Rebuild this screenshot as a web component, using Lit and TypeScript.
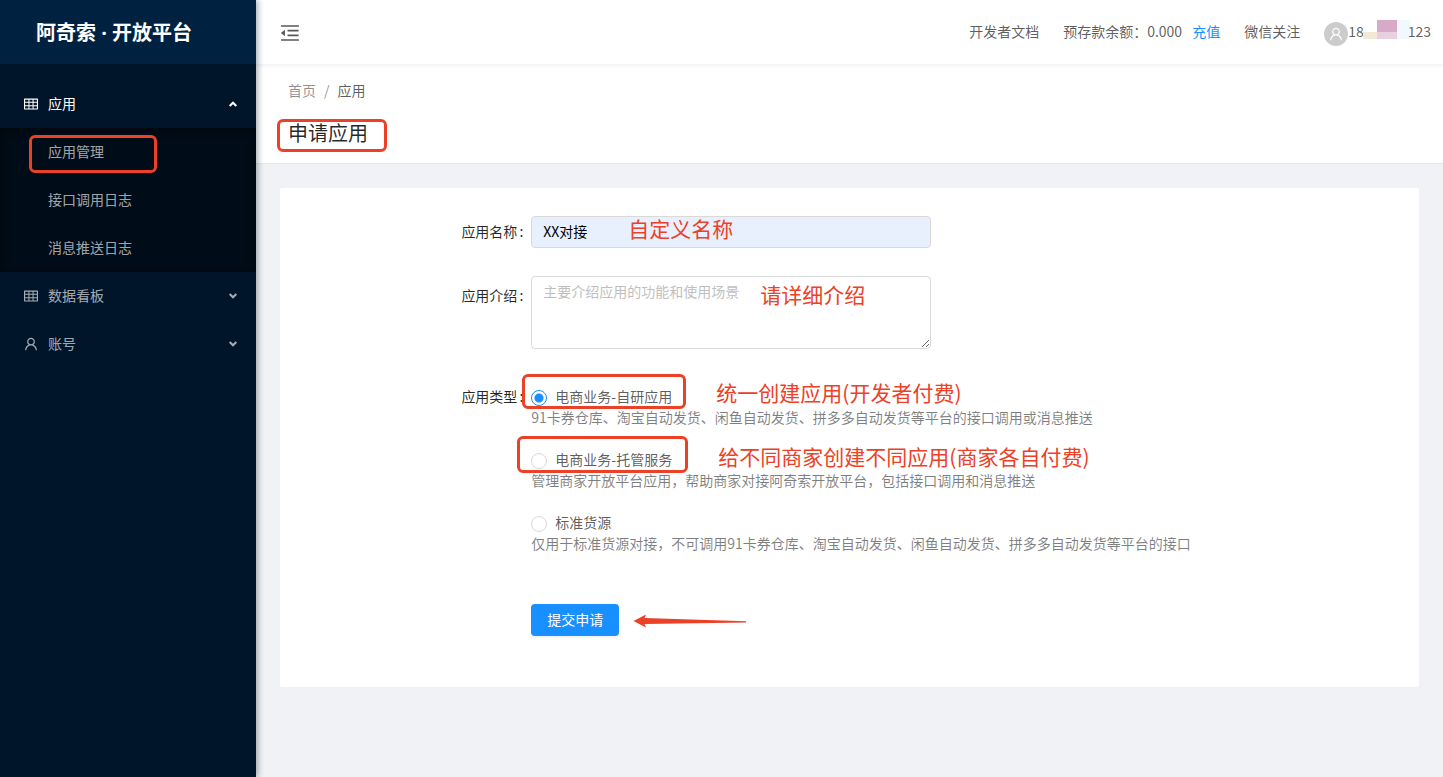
import { LitElement, html, css, svg } from "lit";
import { customElement, state } from "lit/decorators.js";

const TABLE_ICON = "M928 160H96c-17.7 0-32 14.3-32 32v640c0 17.7 14.3 32 32 32h832c17.7 0 32-14.3 32-32V192c0-17.7-14.3-32-32-32zm-40 208H676V232h212v136zm0 224H676V432h212v160zM412 432h200v160H412V432zm200-64H412V232h200v136zm-476 64h212v160H136V432zm0-200h212v136H136V232zm0 424h212v136H136V656zm276 0h200v136H412V656zm476 136H676V656h212v136z";
const USER_ICON = "M858.5 763.6a374 374 0 0 0-80.6-119.5 375.63 375.63 0 0 0-119.5-80.6c-.4-.2-.8-.3-1.2-.5C719.5 518 760 444.7 760 362c0-137-111-248-248-248S264 225 264 362c0 82.7 40.5 156 102.8 201.1-.4.2-.8.3-1.2.5-44.8 18.9-85 46-119.5 80.6a375.63 375.63 0 0 0-80.6 119.5A371.7 371.7 0 0 0 136 901.8a8 8 0 0 0 8 8.2h60c4.4 0 7.9-3.5 8-7.8 2-77.2 33-149.5 87.8-204.3 56.7-56.7 132-87.9 212.2-87.9s155.5 31.2 212.2 87.9C779 752.7 810 825 812 902.2c.1 4.4 3.6 7.8 8 7.8h60a8 8 0 0 0 8-8.2c-1-47.8-10.9-94.3-29.5-138.2zM512 534c-45.9 0-89.1-17.9-121.6-50.4S340 407.9 340 362c0-45.9 17.9-89.1 50.4-121.6S466.1 190 512 190s89.1 17.9 121.6 50.4S684 316.1 684 362c0 45.9-17.9 89.1-50.4 121.6S557.9 534 512 534z";
const FOLD_ICON = "M408 442h480c4.4 0 8-3.6 8-8v-56c0-4.4-3.6-8-8-8H408c-4.4 0-8 3.6-8 8v56c0 4.4 3.6 8 8 8zm-8 204c0 4.4 3.6 8 8 8h480c4.4 0 8-3.6 8-8v-56c0-4.4-3.6-8-8-8H408c-4.4 0-8 3.6-8 8v56zm504-486H120c-4.4 0-8 3.6-8 8v56c0 4.4 3.6 8 8 8h784c4.4 0 8-3.6 8-8v-56c0-4.4-3.6-8-8-8zm0 632H120c-4.4 0-8 3.6-8 8v56c0 4.4 3.6 8 8 8h784c4.4 0 8-3.6 8-8v-56c0-4.4-3.6-8-8-8zM115.4 518.9L271.7 642c5.8 4.6 14.4.5 14.4-6.9V388.9c0-7.4-8.5-11.5-14.4-6.9L115.4 505.1a8.74 8.74 0 0 0 0 13.8z";

const icon = (d: string, cls: string) =>
  html`<svg class=${cls} viewBox="64 64 896 896" fill="currentColor" aria-hidden="true">${svg`<path d=${d}></path>`}</svg>`;

const chevron = (up: boolean) => html`
  <svg class="chevron" viewBox="0 0 8 6" fill="none" stroke="currentColor" stroke-width="2" aria-hidden="true">
    ${svg`<path d=${up ? "M0.700 5L4 1.700L7.300 5" : "M0.700 1L4 4.300L7.300 1"}></path>`}
  </svg>`;

interface AppType {
  id: string;
  name: string;
  desc: string;
  box?: string;
  note?: string;
}

const APP_TYPES: AppType[] = [
  {
    id: "self",
    name: "电商业务-自研应用",
    desc: "91卡券仓库、淘宝自动发货、闲鱼自动发货、拼多多自动发货等平台的接口调用或消息推送",
    box: "mark-self",
    note: "统一创建应用(开发者付费)",
  },
  {
    id: "hosted",
    name: "电商业务-托管服务",
    desc: "管理商家开放平台应用，帮助商家对接阿奇索开放平台，包括接口调用和消息推送",
    box: "mark-hosted",
    note: "给不同商家创建不同应用(商家各自付费)",
  },
  {
    id: "source",
    name: "标准货源",
    desc: "仅用于标准货源对接，不可调用91卡券仓库、淘宝自动发货、闲鱼自动发货、拼多多自动发货等平台的接口",
  },
];

@customElement("app-sider")
class AppSider extends LitElement {
  static styles = css`
    :host {
      display: block;
      width: 256px;
      flex: none;
      background: #001529;
      box-shadow: 2px 0 6px rgba(0, 21, 41, 0.35);
      position: relative;
      z-index: 2;
    }
    .logo {
      display: flex;
      align-items: center;
      height: 64px;
      padding: 2px 36px 0;
      background: #002140;
      color: #fff;
      font-family: "Open Sans", "Noto Sans CJK SC", sans-serif;
      font-size: 20px;
      font-weight: 700;
      line-height: 32px;
      white-space: nowrap;
      box-sizing: border-box;
      margin: 0 0 16px;
    }
    .menu,
    .sub {
      list-style: none;
      margin: 0;
      padding: 0;
    }
    .sub {
      background: #000c17;
      box-shadow: inset 0 2px 8px rgba(0, 0, 0, 0.45);
    }
    .entry {
      display: flex;
      align-items: center;
      gap: 10px;
      width: 100%;
      height: 48px;
      padding: 0 19px 0 24px;
      border: 0;
      background: none;
      box-sizing: border-box;
      color: rgba(255, 255, 255, 0.65);
      font: inherit;
      text-align: left;
      text-decoration: none;
      cursor: pointer;
    }
    .entry.open {
      color: #fff;
    }
    .child {
      padding-left: 48px;
    }
    .icon {
      width: 14px;
      height: 14px;
    }
    .text {
      flex: 1;
      padding-bottom: 2px;
    }
    .chevron {
      width: 8px;
      height: 6px;
    }
    .sub-item {
      position: relative;
    }
    .mark {
      position: absolute;
      left: 29px;
      top: 7px;
      width: 128px;
      height: 38px;
      box-sizing: border-box;
      border: 3px solid #ec4127;
      border-radius: 6px;
      pointer-events: none;
    }
  `;

  render() {
    return html`
      <h1 class="logo">阿奇索 · 开放平台</h1>
      <nav>
        <ul class="menu">
          <li>
            <button class="entry open" type="button" aria-expanded="true">
              ${icon(TABLE_ICON, "icon")}<span class="text">应用</span>${chevron(true)}
            </button>
            <ul class="sub">
              <li class="sub-item">
                <a class="entry child" href="#apps"><span class="text">应用管理</span></a>
                <span class="mark"></span>
              </li>
              <li><a class="entry child" href="#api-log"><span class="text">接口调用日志</span></a></li>
              <li><a class="entry child" href="#push-log"><span class="text">消息推送日志</span></a></li>
            </ul>
          </li>
          <li>
            <button class="entry" type="button" aria-expanded="false">
              ${icon(TABLE_ICON, "icon")}<span class="text">数据看板</span>${chevron(false)}
            </button>
          </li>
          <li>
            <button class="entry" type="button" aria-expanded="false">
              ${icon(USER_ICON, "icon")}<span class="text">账号</span>${chevron(false)}
            </button>
          </li>
        </ul>
      </nav>
    `;
  }
}

@customElement("app-topbar")
class AppTopbar extends LitElement {
  static styles = css`
    :host {
      display: flex;
      align-items: center;
      justify-content: space-between;
      height: 64px;
      padding: 0 12px 0 24px;
      background: #fff;
      box-shadow: 0 1px 4px rgba(0, 21, 41, 0.08);
      position: relative;
      z-index: 1;
    }
    .fold {
      display: flex;
      padding: 2px 0 0;
      border: 0;
      background: none;
      color: rgba(0, 0, 0, 0.65);
      cursor: pointer;
    }
    .fold-icon {
      width: 20px;
      height: 20px;
    }
    .right {
      display: flex;
      align-items: center;
      gap: 24px;
      padding-bottom: 2px;
      white-space: nowrap;
    }
    .link {
      color: inherit;
      text-decoration: none;
    }
    .balance {
      display: flex;
      gap: 10px;
    }
    .recharge {
      color: #1890ff;
      text-decoration: none;
    }
    .user {
      display: flex;
      align-items: center;
      color: inherit;
      text-decoration: none;
    }
    .avatar {
      display: flex;
      align-items: center;
      justify-content: center;
      width: 24px;
      height: 24px;
      margin-top: 6px;
      border-radius: 50%;
      background: #ccc;
      color: #fff;
    }
    .avatar-icon {
      width: 14px;
      height: 14px;
    }
    .mosaic {
      width: 47px;
      height: 20px;
      margin: 0 -2px 4px -1px;
    }
  `;

  render() {
    return html`
      <button class="fold" type="button" aria-label="收起菜单">${icon(FOLD_ICON, "fold-icon")}</button>
      <div class="right">
        <a class="link" href="#docs">开发者文档</a>
        <span class="balance">
          <span>预存款余额：0.000</span>
          <a class="recharge" href="#recharge">充值</a>
        </span>
        <a class="link" href="#wechat">微信关注</a>
        <a class="user" href="#account">
          <span class="avatar">${icon(USER_ICON, "avatar-icon")}</span>
          <span>18</span>
          <svg class="mosaic" viewBox="0 0 47 20" shape-rendering="crispEdges" aria-hidden="true">
            <rect x="0" y="13" width="14" height="7" fill="#f3e8d6"></rect>
            <rect x="14" y="1" width="20" height="12" fill="#d6aac8"></rect>
            <rect x="14" y="13" width="20" height="7" fill="#e9d0df"></rect>
            <rect x="34" y="1" width="13" height="19" fill="#f0f9ff"></rect>
          </svg>
          <span>123</span>
        </a>
      </div>
    `;
  }
}

@customElement("app-apply-form")
class AppApplyForm extends LitElement {
  @state() private type = "self";

  static styles = css`
    :host {
      display: block;
    }
    .form {
      display: flex;
      flex-direction: column;
      gap: 24px;
    }
    .row {
      display: grid;
      grid-template-columns: minmax(0, 5fr) minmax(0, 19fr);
    }
    .label {
      padding: 0 8px 0 0;
      line-height: 38px;
      text-align: right;
      color: rgba(0, 0, 0, 0.85);
      white-space: nowrap;
    }
    .label::after {
      content: ":";
      margin-left: 2px;
    }
    .control {
      position: relative;
      max-width: 400px;
    }
    .control.short {
      padding: 4px 0;
    }
    .control.tall {
      padding-bottom: 4px;
    }
    .input,
    .textarea {
      display: block;
      width: 100%;
      box-sizing: border-box;
      margin: 0;
      border: 1px solid #d9d9d9;
      border-radius: 4px;
      padding: 4px 11px;
      font: inherit;
      line-height: 21px;
      color: #000;
      background: #fff;
      outline: none;
    }
    .input {
      height: 32px;
      padding: 3px 11px 6px;
      background: #e8f0fe;
    }
    .textarea {
      resize: vertical;
    }
    .textarea::placeholder {
      color: #bfbfbf;
    }
    .options {
      display: flex;
      flex-direction: column;
      gap: 21px;
      padding: 9px 0 26px;
    }
    .option {
      position: relative;
      line-height: 21px;
    }
    .choice {
      display: flex;
      align-items: center;
      gap: 8px;
      width: fit-content;
      cursor: pointer;
    }
    .radio {
      appearance: none;
      flex: none;
      width: 16px;
      height: 16px;
      margin: 2px 0 0;
      border: 1px solid #d9d9d9;
      border-radius: 50%;
      background: #fff;
    }
    .radio:checked {
      border-color: #1890ff;
      background: radial-gradient(circle, #1890ff 4px, #fff 5px);
    }
    .desc {
      margin: 0;
      color: rgba(0, 0, 0, 0.5);
    }
    .action {
      grid-column: 2;
      display: flex;
      align-items: center;
      gap: 14px;
    }
    .submit {
      height: 32px;
      padding: 0 16px 2px;
      border: 0;
      border-radius: 4px;
      background: #1890ff;
      box-shadow: 0 2px 0 rgba(0, 0, 0, 0.045);
      color: #fff;
      font: inherit;
      line-height: 30px;
      cursor: pointer;
    }
    .arrow {
      width: 114px;
      height: 14px;
      margin-top: 2px;
    }
    .note {
      position: absolute;
      color: #ec4127;
      font-size: 21px;
      line-height: 30px;
      white-space: nowrap;
      pointer-events: none;
    }
    .note-name {
      left: 97px;
      top: 1px;
    }
    .note-intro {
      left: 229px;
      top: 3px;
    }
    .note-self {
      left: 185px;
      top: -9px;
    }
    .note-hosted {
      left: 187px;
      top: -8px;
    }
    .mark {
      position: absolute;
      box-sizing: border-box;
      border: 3px solid #ec4127;
      border-radius: 6px;
      pointer-events: none;
    }
    .mark-self {
      left: -9px;
      top: -12px;
      width: 164px;
      height: 35px;
    }
    .mark-hosted {
      left: -14px;
      top: -13px;
      width: 171px;
      height: 37px;
    }
  `;

  private renderOption(t: AppType) {
    return html`
      <div class="option">
        <label class="choice">
          <input
            class="radio"
            type="radio"
            name="type"
            .checked=${this.type === t.id}
            @change=${() => (this.type = t.id)}
          />
          <span>${t.name}</span>
        </label>
        <p class="desc">${t.desc}</p>
        ${t.box ? html`<span class="mark ${t.box}"></span>` : null}
        ${t.note ? html`<span class="note note-${t.id}">${t.note}</span>` : null}
      </div>
    `;
  }

  render() {
    return html`
      <form class="form" @submit=${(e: Event) => e.preventDefault()}>
        <div class="row">
          <label class="label" for="name">应用名称</label>
          <div class="control short">
            <input class="input" id="name" type="text" value="XX对接" />
            <span class="note note-name">自定义名称</span>
          </div>
        </div>
        <div class="row">
          <label class="label" for="intro">应用介绍</label>
          <div class="control tall">
            <textarea class="textarea" id="intro" rows="3" placeholder="主要介绍应用的功能和使用场景"></textarea>
            <span class="note note-intro">请详细介绍</span>
          </div>
        </div>
        <div class="row" role="radiogroup" aria-labelledby="type-label">
          <span class="label" id="type-label">应用类型</span>
          <div class="options">${APP_TYPES.map((t) => this.renderOption(t))}</div>
        </div>
        <div class="row">
          <div class="action">
            <button class="submit" type="submit">提交申请</button>
            <svg class="arrow" viewBox="0 0 114 14" aria-hidden="true">
              <path d="M0.500 7L13 0.500L11.500 4L113 7.200V8.600L11.500 10L13 13.500Z" fill="#ec4127"></path>
            </svg>
          </div>
        </div>
      </form>
    `;
  }
}

@customElement("app-root")
class AppRoot extends LitElement {
  static styles = css`
    :host {
      display: flex;
      min-height: 100vh;
      background: #f0f2f5;
      color: rgba(0, 0, 0, 0.65);
      font-family: "Noto Sans CJK SC", "Noto Sans", sans-serif;
      font-size: 14px;
      line-height: 21px;
    }
    .main {
      flex: 1;
      min-width: 0;
    }
    .page-head {
      padding: 15px 32px 14px;
      background: #fff;
      border-bottom: 1px solid #e8e8e8;
    }
    .crumbs {
      display: flex;
      gap: 8px;
      margin-bottom: 16px;
      line-height: 22px;
    }
    .crumb,
    .sep {
      color: rgba(0, 0, 0, 0.45);
      text-decoration: none;
    }
    .title {
      position: relative;
      width: fit-content;
      margin: 0;
      color: rgba(0, 0, 0, 0.85);
      font-size: 20px;
      font-weight: 400;
      line-height: 32px;
    }
    .title-mark {
      position: absolute;
      inset: 2px -19px -3px -11px;
      border: 3px solid #ec4127;
      border-radius: 6px;
      pointer-events: none;
    }
    .card {
      margin: 24px;
      padding: 24px 24px 51px;
      background: #fff;
      border-radius: 2px;
    }
  `;

  render() {
    return html`
      <app-sider></app-sider>
      <div class="main">
        <app-topbar></app-topbar>
        <header class="page-head">
          <nav class="crumbs">
            <a class="crumb" href="#home">首页</a>
            <span class="sep">/</span>
            <span>应用</span>
          </nav>
          <h2 class="title">申请应用<span class="title-mark"></span></h2>
        </header>
        <main class="card"><app-apply-form></app-apply-form></main>
      </div>
    `;
  }
}
